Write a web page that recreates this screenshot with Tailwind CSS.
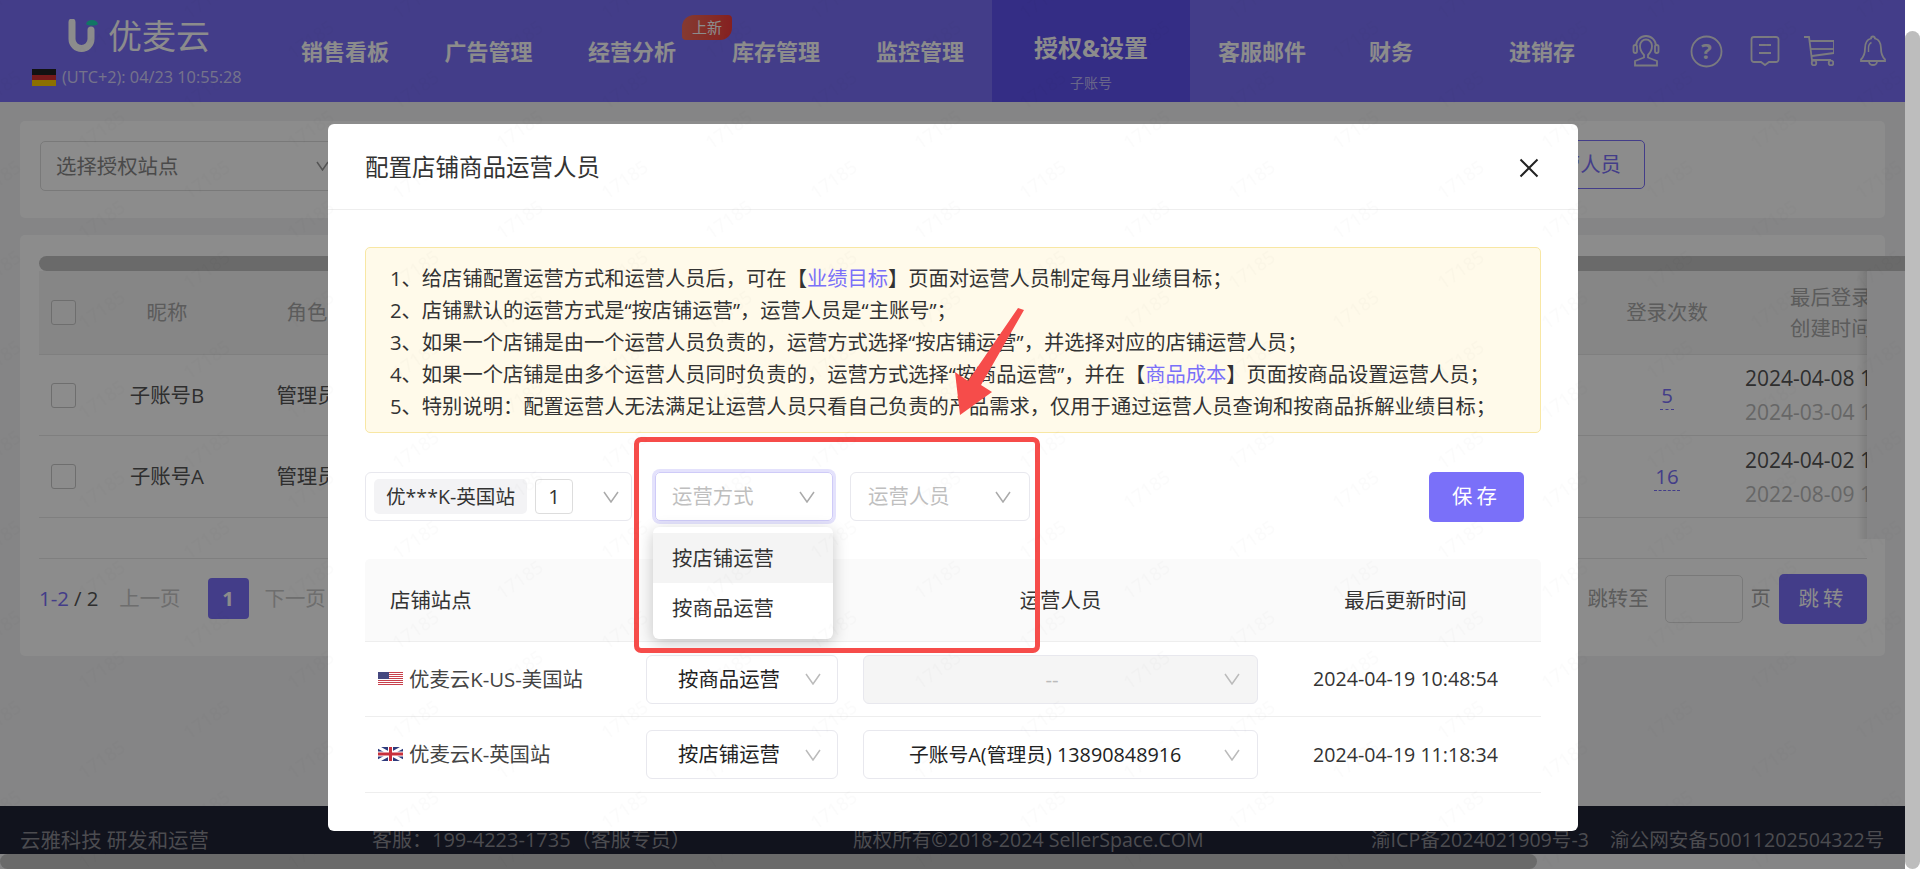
<!DOCTYPE html>
<html lang="zh-CN">
<head>
    <meta charset="UTF-8">
    <title>配置店铺商品运营人员</title>
    <script src="https://cdn.jsdelivr.net/npm/@tailwindcss/browser@4"></script>
</head>
<body class="font-['Open_Sans','Noto_Sans_CJK_SC',sans-serif]">
<div class="relative w-[1920px] h-[869px] overflow-hidden flex text-[20.4px] bg-white">

    <!-- Page under the modal -->
    <div class="w-[1905px] h-full flex flex-col bg-[#f2f3f5]">

        <!-- Header -->
        <header class="h-[102px] shrink-0 flex bg-[#7a70f9] text-white">
            <div class="w-[273px] shrink-0 pt-[19px] pl-[32px]">
                <div class="flex items-center h-[34px] pl-[35px]">
                    <svg class="w-[31px] h-[34px]" viewBox="0 0 31 34">
                        <path d="M5 3v17a9.500 9.500 0 0 0 19 0v-9" fill="none" stroke="#fff" stroke-width="7" stroke-linecap="round"/>
                        <path d="M19 5c1-3 3-4 6-4s5 1 6 4c-2 2-10 2-12 0z" fill="#1fd8b8"/>
                    </svg>
                    <span class="ml-[10px] text-[34px] leading-[34px]">优麦云</span>
                </div>
                <div class="flex items-center mt-[16px] h-[17px]">
                    <svg class="w-[24px] h-[17px]" viewBox="0 0 24 17">
                        <rect width="24" height="6" fill="#222"/>
                        <rect y="6" width="24" height="6" fill="#d83030"/>
                        <rect y="11" width="24" height="6" fill="#ffcc00"/>
                    </svg>
                    <span class="ml-[6px] text-[16.300px] leading-[17px] text-white/70 whitespace-nowrap">(UTC+2): 04/23 10:55:28</span>
                </div>
            </div>
            <nav class="flex h-full font-bold text-[22px]">
                <a class="w-[144px] flex items-center justify-center">销售看板</a>
                <a class="w-[143px] flex items-center justify-center">广告管理</a>
                <a class="relative w-[144px] flex items-center justify-center">
                    经营分析
                    <span class="absolute left-[122px] top-[15px] w-[50px] h-[25px] flex items-center justify-center rounded-tl-[12px] rounded-br-[12px] rounded-tr-[4px] rounded-bl-[4px] bg-gradient-to-r from-[#f26a5a] to-[#f23a3a] text-[15px] font-normal">上新</span>
                </a>
                <a class="w-[144px] flex items-center justify-center">库存管理</a>
                <a class="w-[144px] flex items-center justify-center">监控管理</a>
                <a class="w-[198px] flex flex-col items-center bg-[#6052f2] pt-[31px]">
                    <span class="text-[24px] leading-[34px]">授权&amp;设置</span>
                    <span class="mt-[10px] text-[14px] leading-[16px] font-normal text-white/60">子账号</span>
                </a>
                <a class="w-[144px] flex items-center justify-center">客服邮件</a>
                <a class="w-[114px] flex items-center justify-center">财务</a>
                <a class="w-[184px] flex items-center justify-center pl-[4px]">进销存</a>
            </nav>
            <div class="flex items-start pt-[35px] text-[#e0e0e8]">
                <svg class="w-[28px] h-[32px]" viewBox="0 0 28 32" fill="none" stroke="currentColor" stroke-width="1.800">
                    <path d="M4 11a10 10 0 0 1 20 0"/>
                    <rect x="1.500" y="10" width="3.500" height="8" rx="1.700"/>
                    <rect x="23" y="10" width="3.500" height="8" rx="1.700"/>
                    <path d="M8 11c0-4 3-6.500 6-6.500s6 2.500 6 6.500c0 4-2 7-4 9v2.500l9 3.500v4.500H3V26l9-3.500V20c-2-2-4-5-4-9z"/>
                </svg>
                <svg class="w-[33px] h-[33px] ml-[30px]" viewBox="0 0 33 33" fill="none" stroke="currentColor" stroke-width="1.800">
                    <circle cx="16.500" cy="16.500" r="15"/>
                    <text x="16.500" y="24" text-anchor="middle" font-size="22" font-weight="700" fill="currentColor" stroke="none">?</text>
                </svg>
                <svg class="w-[30px] h-[31px] ml-[27px]" viewBox="0 0 30 31" fill="none" stroke="currentColor" stroke-width="1.800">
                    <path d="M4 2h22a2.500 2.500 0 0 1 2.500 2.500v20a2.500 2.500 0 0 1-2.500 2.500h-7l-4 3-4-3H4a2.500 2.500 0 0 1-2.500-2.500v-20A2.500 2.500 0 0 1 4 2z"/>
                    <path d="M9 10h12M9 18h12"/>
                </svg>
                <svg class="w-[30px] h-[31px] ml-[24px]" viewBox="0 0 30 31" fill="none" stroke="currentColor" stroke-width="1.800">
                    <path d="M0 2h5l3 23h19"/>
                    <path d="M6 6h24v12L8 21"/>
                    <path d="M7 14h23"/>
                    <circle cx="10" cy="28" r="2.300"/>
                    <circle cx="27" cy="28" r="2.300"/>
                </svg>
                <svg class="w-[26px] h-[31px] ml-[26px]" viewBox="0 0 26 31" fill="none" stroke="currentColor" stroke-width="1.800">
                    <path d="M13 1.500c-1 0-2 .5-2 2-4 1-6 5-6 10 0 4-1 8-4 11v1.500h24V24.500c-3-3-4-7-4-11 0-5-2-9-6-10 0-1.500-1-2-2-2z"/>
                    <path d="M9 26.500a4 3.500 0 0 0 8 0"/>
                    <path d="M8.500 17v-4c0-2.500 1-4.500 3-5.500" stroke-width="1.400"/>
                </svg>
            </div>
        </header>

        <!-- Content -->
        <main class="flex-1 px-[20px] pt-[19px]">
            <div class="h-[97px] bg-white rounded-[5px] flex items-start pl-[20px] pt-[19px]">
                <div class="mt-[1px] w-[300px] h-[50px] border border-[#ddd] rounded-[5px] flex items-center justify-between pl-[15px] pr-[10px] text-[#888]">
                    <span>选择授权站点</span>
                    <svg class="w-[13px] h-[10px]" viewBox="0 0 13 10" fill="none" stroke="#999" stroke-width="1.500"><path d="M1 1l5.500 8L12 1"/></svg>
                </div>
                <button class="ml-auto mr-[240px] w-[200px] h-[49px] border border-[#7a70f9] rounded-[5px] text-[#7a70f9] text-right pr-[23px]">配置运营人员</button>
            </div>

            <div class="mt-[17px] h-[421px] bg-white rounded-[5px] pt-[21px] pl-[19px]">
                <div class="w-[1866px] h-[15px] bg-[#c2c2c2] rounded-l-full"></div>
                <div class="flex">
                    <div class="relative w-[1828px]">
                        <div class="grid grid-cols-[58px_140px_140px_1fr_120px_140px] items-center h-[84px] bg-[#f4f4f4] border-b border-[#e8e8e8] text-[#a8a8a8]">
                            <div class="pl-[12px]"><div class="w-[25px] h-[25px] border border-[#c8c8c8] rounded-[3px] bg-white/40"></div></div>
                            <div class="text-center">昵称</div>
                            <div class="text-center">角色</div>
                            <div></div>
                            <div class="text-center">登录次数</div>
                            <div class="pl-[63px] overflow-hidden whitespace-nowrap leading-[31px]">最后登录<br>创建时间</div>
                        </div>
                        <div class="grid grid-cols-[58px_140px_140px_1fr_120px_140px] items-center h-[81px] border-b border-[#e8e8e8] text-[#555]">
                            <div class="pl-[12px]"><div class="w-[25px] h-[25px] border border-[#c8c8c8] rounded-[3px]"></div></div>
                            <div class="text-center">子账号B</div>
                            <div class="text-center">管理员</div>
                            <div></div>
                            <div class="text-center"><span class="text-[#7a70f9] border-b border-dashed border-[#7a70f9] px-[1px]">5</span></div>
                            <div class="pl-[18px] overflow-hidden whitespace-nowrap leading-[34px] text-[21px]">2024-04-08 10:12:33<br><span class="text-[#bbb]">2024-03-04 11:25:40</span></div>
                        </div>
                        <div class="grid grid-cols-[58px_140px_140px_1fr_120px_140px] items-center h-[82px] border-b border-[#e8e8e8] text-[#555]">
                            <div class="pl-[12px]"><div class="w-[25px] h-[25px] border border-[#c8c8c8] rounded-[3px]"></div></div>
                            <div class="text-center">子账号A</div>
                            <div class="text-center">管理员</div>
                            <div></div>
                            <div class="text-center"><span class="text-[#7a70f9] border-b border-dashed border-[#7a70f9] px-[1px]">16</span></div>
                            <div class="pl-[18px] overflow-hidden whitespace-nowrap leading-[34px] text-[21px]">2024-04-02 15:06:18<br><span class="text-[#bbb]">2022-08-09 16:40:02</span></div>
                        </div>
                        <div class="absolute right-0 top-0 w-[10px] h-[268px] bg-gradient-to-l from-black/10 to-transparent"></div>
                    </div>
                    <div class="flex-1 h-[268px] bg-[#f3f3f5]"></div>
                </div>
                <div class="w-[1828px] mt-[-21px] h-[41px] border-b border-[#e8e8e8]"></div>
                <div class="w-[1828px] flex items-center mt-[19px] h-[41px]">
                    <span class="text-[#7a70f9]">1-2</span>
                    <span class="ml-[5px] text-[#555]">/ 2</span>
                    <span class="ml-[21px] text-[#c8c8c8]">上一页</span>
                    <span class="ml-[27px] w-[41px] h-[41px] rounded-[4px] bg-[#7a70f9] text-white font-bold flex items-center justify-center">1</span>
                    <span class="ml-[16px] text-[#c8c8c8]">下一页</span>
                    <span class="ml-auto text-[#a8a8a8]">跳转至</span>
                    <div class="ml-[16px] w-[78px] h-[48px] border border-[#ddd] rounded-[5px]"></div>
                    <span class="ml-[8px] text-[#a8a8a8]">页</span>
                    <button class="ml-[8px] w-[88px] h-[50px] rounded-[5px] bg-[#7a70f9] text-white tracking-[4px]">跳转</button>
                </div>
            </div>
        </main>

        <!-- Footer -->
        <footer class="relative h-[48px] shrink-0 bg-[#1f2335] text-[#8a8a92] whitespace-nowrap leading-[28px] pt-[20px] overflow-hidden">
            <span class="absolute left-[20px]">云雅科技 研发和运营</span>
            <span class="absolute left-[372px] text-[20px]">客服：199-4223-1735（客服专员）</span>
            <span class="absolute left-[853px] text-[19.600px]">版权所有©2018-2024 SellerSpace.COM</span>
            <span class="absolute left-[1371px] text-[19.600px]">渝ICP备2024021909号-3</span>
            <span class="absolute left-[1610px] text-[19.600px]">渝公网安备50011202504322号</span>
        </footer>
        <div class="h-[15px] shrink-0">
            <div class="w-[1537px] h-full bg-[#c2c2c2] rounded-full"></div>
        </div>
    </div>

    <!-- Window scrollbar -->
    <div class="w-[15px] h-full bg-white pt-[31px]">
        <div class="h-full bg-[#bdbdbd] rounded-full"></div>
    </div>

    <!-- Overlay -->
    <div class="absolute left-0 top-0 w-[1905px] h-full bg-black/45"></div>

    <!-- Modal -->
    <div class="absolute left-[328px] top-[124px] w-[1250px] h-[707px] bg-white rounded-[6px] text-[#333]">
        <div class="h-[86px] border-b border-[#eee] flex items-center justify-between pl-[37px] pr-[39px] pt-[3px]">
            <h2 class="text-[23.500px]">配置店铺商品运营人员</h2>
            <svg class="w-[20px] h-[20px]" viewBox="0 0 20 20" fill="none" stroke="#222" stroke-width="2"><path d="M1.500 1.500l17 17M18.500 1.500l-17 17"/></svg>
        </div>

        <div class="mx-[37px]">
            <div class="mt-[37px] h-[186px] border border-[#f8e7a4] bg-[#fffaea] rounded-[5px] pl-[24px] pt-[14px] leading-[32px] whitespace-nowrap text-[20.280px]">
                <p>1、给店铺配置运营方式和运营人员后，可在【<span class="text-[#7a70f9]">业绩目标</span>】页面对运营人员制定每月业绩目标；</p>
                <p>2、店铺默认的运营方式是“按店铺运营”，运营人员是“主账号”；</p>
                <p>3、如果一个店铺是由一个运营人员负责的，运营方式选择“按店铺运营”，并选择对应的店铺运营人员；</p>
                <p>4、如果一个店铺是由多个运营人员同时负责的，运营方式选择“按商品运营”，并在【<span class="text-[#7a70f9]">商品成本</span>】页面按商品设置运营人员；</p>
                <p>5、特别说明：配置运营人无法满足让运营人员只看自己负责的产品需求，仅用于通过运营人员查询和按商品拆解业绩目标；</p>
            </div>

            <!-- Form row -->
            <div class="mt-[39px] h-[49px] flex items-center">
                <div class="w-[267px] h-full border border-[#e8e8ee] rounded-[6px] flex items-center pl-[8px] pr-[12px]">
                    <span class="h-[35px] w-[153px] bg-[#f3f3f5] rounded-[5px] flex items-center justify-center text-[19.600px] whitespace-nowrap">优***K-英国站</span>
                    <span class="ml-[8px] h-[35px] w-[38px] border border-[#ddd] rounded-[4px] flex items-center justify-center">1</span>
                    <svg class="ml-auto w-[16px] h-[12px]" viewBox="0 0 16 12" fill="none" stroke="#aaa" stroke-width="1.500"><path d="M1 1l7 10 7-10"/></svg>
                </div>
                <div class="ml-[23px] w-[178px] h-full border border-[#cfcbf8] ring-[3px] ring-[#e4e2fc] rounded-[5px] flex items-center justify-between pl-[16px] pr-[17px] text-[#bfbfbf]">
                    <span>运营方式</span>
                    <svg class="w-[16px] h-[12px]" viewBox="0 0 16 12" fill="none" stroke="#aaa" stroke-width="1.500"><path d="M1 1l7 10 7-10"/></svg>
                </div>
                <div class="ml-[17px] w-[180px] h-full border border-[#e8e8ee] rounded-[6px] flex items-center justify-between pl-[17px] pr-[18px] text-[#bfbfbf]">
                    <span>运营人员</span>
                    <svg class="w-[16px] h-[12px]" viewBox="0 0 16 12" fill="none" stroke="#aaa" stroke-width="1.500"><path d="M1 1l7 10 7-10"/></svg>
                </div>
                <button class="ml-auto mr-[17px] w-[95px] h-[50px] rounded-[5px] bg-[#7a70f9] text-white tracking-[4px]">保存</button>
            </div>

            <!-- Store table -->
            <div class="mt-[38px]">
                <div class="grid grid-cols-[281px_217px_395px_1fr] items-center h-[83px] bg-[#fafafa] border-b border-[#eee] rounded-t-[5px]">
                    <div class="pl-[25px]">店铺站点</div>
                    <div></div>
                    <div class="text-center">运营人员</div>
                    <div class="text-center pl-[12px]">最后更新时间</div>
                </div>
                <div class="grid grid-cols-[281px_217px_395px_1fr] items-center h-[75px] border-b border-[#eee]">
                    <div class="flex items-center pl-[13px] text-[#444]">
                        <svg class="w-[25px] h-[14px]" viewBox="0 0 25 14">
                            <rect width="25" height="14" fill="#fff"/>
                            <path d="M0 0h25v1H0zM0 2h25v1H0zM0 4h25v1H0zM0 6h25v1H0zM0 8h25v1H0zM0 10h25v1H0zM0 12h25v1H0z" fill="#c8404c"/>
                            <rect width="11" height="7" fill="#45487f"/>
                        </svg>
                        <span class="ml-[6px] whitespace-nowrap">优麦云K-US-美国站</span>
                    </div>
                    <div class="w-[192px] h-[49px] border border-[#e8e8ee] rounded-[6px] flex items-center justify-between pl-[31px] pr-[16px] text-[#222]">
                        <span>按商品运营</span>
                        <svg class="w-[16px] h-[12px]" viewBox="0 0 16 12" fill="none" stroke="#bbb" stroke-width="1.500"><path d="M1 1l7 10 7-10"/></svg>
                    </div>
                    <div class="h-[49px] border border-[#e8e8ee] bg-[#f5f5f5] rounded-[6px] flex items-center pr-[17px] text-[#bbb]">
                        <span class="flex-1 text-center pl-[16px]">--</span>
                        <svg class="w-[16px] h-[12px]" viewBox="0 0 16 12" fill="none" stroke="#bbb" stroke-width="1.500"><path d="M1 1l7 10 7-10"/></svg>
                    </div>
                    <div class="text-center pl-[12px] whitespace-nowrap text-[19.600px]">2024-04-19 10:48:54</div>
                </div>
                <div class="grid grid-cols-[281px_217px_395px_1fr] items-center h-[76px] border-b border-[#eee]">
                    <div class="flex items-center pl-[13px] text-[#444]">
                        <svg class="w-[25px] h-[14px]" viewBox="0 0 25 14">
                            <rect width="25" height="14" fill="#2d3a7c"/>
                            <path d="M0 0l25 14M25 0L0 14" stroke="#fff" stroke-width="3"/>
                            <path d="M12.500 0v14M0 7h25" stroke="#fff" stroke-width="5"/>
                            <path d="M12.500 0v14M0 7h25" stroke="#c8303c" stroke-width="3"/>
                        </svg>
                        <span class="ml-[6px] whitespace-nowrap">优麦云K-英国站</span>
                    </div>
                    <div class="w-[192px] h-[49px] border border-[#e8e8ee] rounded-[6px] flex items-center justify-between pl-[31px] pr-[16px] text-[#222]">
                        <span>按店铺运营</span>
                        <svg class="w-[16px] h-[12px]" viewBox="0 0 16 12" fill="none" stroke="#bbb" stroke-width="1.500"><path d="M1 1l7 10 7-10"/></svg>
                    </div>
                    <div class="h-[49px] border border-[#e8e8ee] rounded-[6px] flex items-center pl-[45px] pr-[17px] text-[#222] whitespace-nowrap">
                        <span class="flex-1 text-[19.800px]">子账号A(管理员) 13890848916</span>
                        <svg class="w-[16px] h-[12px]" viewBox="0 0 16 12" fill="none" stroke="#bbb" stroke-width="1.500"><path d="M1 1l7 10 7-10"/></svg>
                    </div>
                    <div class="text-center pl-[12px] whitespace-nowrap text-[19.600px]">2024-04-19 11:18:34</div>
                </div>
            </div>
        </div>

        <!-- Open dropdown -->
        <div class="absolute left-[325px] top-[403px] w-[180px] h-[112px] bg-white rounded-[6px] shadow-[0_4px_16px_rgba(0,0,0,0.22)] pt-[6px]">
            <div class="h-[50px] bg-[#f4f4f4] flex items-center pl-[19px]">按店铺运营</div>
            <div class="h-[50px] flex items-center pl-[19px]">按商品运营</div>
        </div>

        <!-- Annotation box -->
        <div class="absolute left-[306px] top-[313px] w-[406px] h-[216px] border-[5px] border-[#f64c4a] rounded-[7px]"></div>
    </div>

    <!-- Annotation arrow -->
    <svg class="absolute left-[940px] top-[296px] w-[100px] h-[130px]" viewBox="940 296 100 130">
        <polygon points="1018,308 1024,310 981,385 992,392 960,415 955,372 968,381" fill="#f64c4a"/>
    </svg>

    <!-- Watermark -->
    <svg class="absolute inset-0 w-[1905px] h-[869px] pointer-events-none">
        <defs>
            <pattern id="wm" width="209" height="90" patternUnits="userSpaceOnUse">
                <g fill="#000" fill-opacity="0.016" font-size="18" text-anchor="middle">
                    <text x="102" y="46" transform="rotate(-35 102 40)">17185</text>
                    <text x="207" y="6" transform="rotate(-35 207 0)">17185</text>
                    <text x="-2" y="6" transform="rotate(-35 -2 0)">17185</text>
                    <text x="207" y="96" transform="rotate(-35 207 90)">17185</text>
                    <text x="-2" y="96" transform="rotate(-35 -2 90)">17185</text>
                </g>
            </pattern>
        </defs>
        <rect width="1905" height="869" fill="url(#wm)"/>
    </svg>
</div>
</body>
</html>
